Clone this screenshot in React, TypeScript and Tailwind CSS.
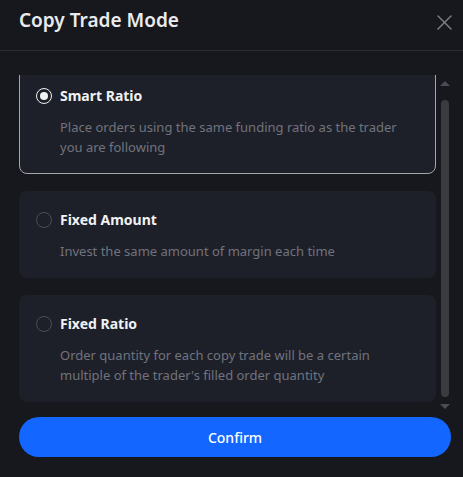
import { useState } from 'react'

interface Mode {
  id: string
  title: string
  desc: string
}

const modes: Mode[] = [
  { id: 'smart', title: 'Smart Ratio', desc: 'Place orders using the same funding ratio as the trader you are following' },
  { id: 'amount', title: 'Fixed Amount', desc: 'Invest the same amount of margin each time' },
  { id: 'ratio', title: 'Fixed Ratio', desc: "Order quantity for each copy trade will be a certain multiple of the trader's filled order quantity" },
]

export default function App() {
  const [selected, setSelected] = useState('smart')

  return (
    <div className="w-[463px] h-[477px] bg-[#17181d] text-white flex flex-col" style={{ fontFamily: '"Noto Sans", "Open Sans", sans-serif' }}>
      {/* Header */}
      <div className="h-[51px] flex items-center justify-between pl-[19px] pr-[10px] border-b border-[#2a2c33]">
        <h2 className="text-[19px] font-semibold text-[#eaebee] leading-none pb-[9px]">Copy Trade Mode</h2>
        <button className="w-[16px] h-[16px] flex items-center justify-center text-[#7f828b] mr-[1px] mb-[6px]">
          <svg width="15" height="15" viewBox="0 0 15 15" fill="none" stroke="currentColor" strokeWidth="1.4" strokeLinecap="round">
            <path d="M1 1l13 13M14 1L1 14" />
          </svg>
        </button>
      </div>

      {/* Scroll area */}
      <div className="mt-[24px] ml-[19px] mr-[12px] h-[337px] flex">
        <div className="w-[417px] overflow-hidden">
          <div className="-mt-[8px] flex flex-col gap-[17px]">
            {modes.map((m) => {
              const active = selected === m.id
              return (
                <div
                  key={m.id}
                  onClick={() => setSelected(m.id)}
                  className={`rounded-[8px] bg-[#1e2029] border pl-[16px] pr-[16px] pt-[17px] pb-[16px] cursor-pointer ${
                    active ? 'border-[#a4a6ab]' : 'border-transparent'
                  }`}
                >
                  <div className="flex items-center gap-[8px] h-[22px]">
                    {active ? (
                      <span className="w-[16px] h-[16px] rounded-full border-[1.5px] border-[#f0f1f3] flex items-center justify-center">
                        <span className="w-[8px] h-[8px] rounded-full bg-[#f0f1f3]" />
                      </span>
                    ) : (
                      <span className="w-[16px] h-[16px] rounded-full border border-[#4b4e57]" />
                    )}
                    <span className="text-[14px] font-bold text-[#f0f1f3] leading-[22px]">{m.title}</span>
                  </div>
                  <p className="mt-[10px] ml-[24px] text-[13px] leading-[20px] text-[#70737d]">{m.desc}</p>
                </div>
              )
            })}
          </div>
        </div>

        {/* Scrollbar */}
        <div className="w-[15px] flex flex-col items-center pl-[3px]">
          <div className="mt-[6px] w-0 h-0 border-l-[5px] border-r-[5px] border-b-[5px] border-l-transparent border-r-transparent border-b-[#4a4c53]" />
          <div className="mt-[14px] w-[8px] h-[297px] rounded-[4px] bg-[#393b41]" />
          <div className="mt-[7px] w-0 h-0 border-l-[5px] border-r-[5px] border-t-[5px] border-l-transparent border-r-transparent border-t-[#4a4c53]" />
        </div>
      </div>

      {/* Footer */}
      <div className="px-[12px] pl-[19px] mt-[5px]">
        <button className="w-[432px] h-[40px] rounded-full bg-[#1366ff] text-[14px] font-medium text-white">Confirm</button>
      </div>
    </div>
  )
}
